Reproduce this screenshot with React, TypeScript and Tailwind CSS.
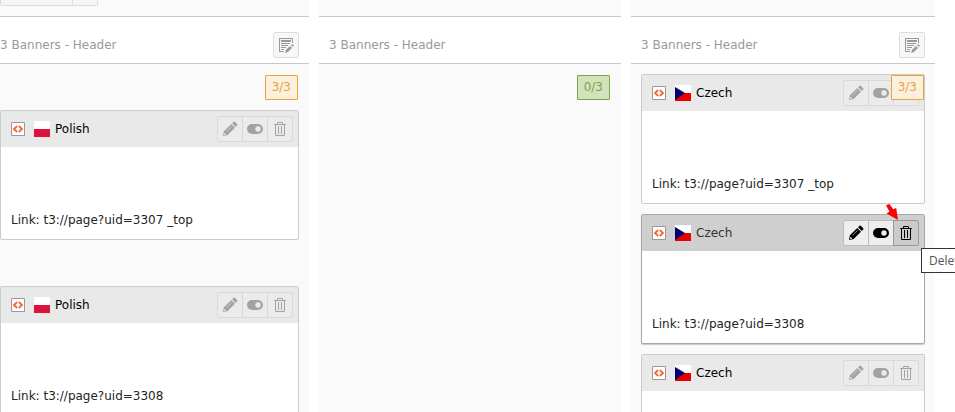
import type { ReactNode } from "react";
import clsx from "clsx";

const Icon = ({ children }: { children: ReactNode }) => (
  <svg className="block size-4 shrink-0" viewBox="0 0 16 16" fill="currentColor" aria-hidden="true">
    {children}
  </svg>
);

const PencilIcon = () => (
  <Icon>
    <path
      fillRule="evenodd"
      d="M9.2 3 1.9 10.3 1 15l4.7-.9L13 6.8zM9.4 5.2l.3.3-5.1 5.1-.3-.3zM2.8 12l1.2 1.2-.3.5-1.1.2-.5-.5.2-1.1z"
    />
    <path d="M10 2.2 11.5.8a.9.9 0 0 1 1.3 0l2.4 2.4a.9.9 0 0 1 0 1.3L13.8 6z" />
  </Icon>
);

const ToggleIcon = () => (
  <Icon>
    <path
      fillRule="evenodd"
      d="M5 3h6a5 5 0 0 1 0 10H5A5 5 0 0 1 5 3zm6 2.3a2.7 2.7 0 1 0 0 5.4 2.7 2.7 0 0 0 0-5.4z"
    />
  </Icon>
);

const TrashIcon = () => (
  <Icon>
    <path d="M6 5h1v8H6zM9 5h1v8H9z" />
    <path d="M13 3h-2v-.75C11 1.56 10.44 1 9.75 1h-3.5C5.56 1 5 1.56 5 2.25V3H3v10.75c0 .69.56 1.25 1.25 1.25h7.5c.69 0 1.25-.56 1.25-1.25V3zM6 2.25A.25.25 0 0 1 6.25 2h3.5a.25.25 0 0 1 .25.25V3H6v-.75zm6 11.5a.25.25 0 0 1-.25.25h-7.5a.25.25 0 0 1-.25-.25V4h8v9.75z" />
    <path d="M13.5 4h-11a.5.5 0 0 1 0-1h11a.5.5 0 0 1 0 1z" />
  </Icon>
);

const EditColumnIcon = () => (
  <Icon>
    <path d="M1 1h14v5h-1V2H2v12h4v1H1z" />
    <path d="M3 3h10v2H3zM3 6h9v1H3zM3 8h7v1H3zM3 10h5v1H3zM3 12h3v1H3z" />
    <path d="M12 9 7.9 13.1 7 16l2.9-.9L14 11zM12.9 8.1 14 7l2 2-1.1 1.1z" />
  </Icon>
);

const HtmlIcon = () => (
  <Icon>
    <path fill="#fff" stroke="#999" d="M1.5 1.5h13v13h-13z" />
    <path fill="none" stroke="#fa6432" strokeWidth="1.8" d="M7.2 5 4 8l3.2 3M8.8 5 12 8l-3.2 3" />
  </Icon>
);

const PolishFlag = () => (
  <Icon>
    <path fill="#fff" d="M0 0h16v8H0z" />
    <path fill="#dc143c" d="M0 8h16v8H0z" />
  </Icon>
);

const CzechFlag = () => (
  <Icon>
    <path fill="#fff" d="M0 0h16v8H0z" />
    <path fill="#e80000" d="M0 8h16v8H0z" />
    <path fill="#00006f" d="M0 2l10 6-10 7z" />
  </Icon>
);

const Tooltip = () => (
  <>
    <svg className="absolute -left-2 -top-[17px] h-[17px] w-3" viewBox="0 0 12 17" fill="#f00" aria-hidden="true">
      <path d="M0 1.2 3.5 0l3.7 5.3 3-1.3L12 16 .6 9.4l2.8-2z" />
    </svg>
    <span
      role="tooltip"
      className="absolute left-[27px] top-[27px] z-20 whitespace-nowrap border border-[#333] bg-white px-[7px] font-['Open_Sans',sans-serif] text-xs leading-[23px] text-[#555]"
    >
      Delete
    </span>
  </>
);

type CardProps = {
  lang: "Polish" | "Czech";
  link?: string;
  active?: boolean;
};

const Card = ({ lang, link, active = false }: CardProps) => {
  const button = clsx(
    "relative -ml-px flex size-[26px] items-center justify-center border first:ml-0 first:rounded-l-xs last:rounded-r-xs",
    active ? "border-[#bbb] bg-[#eee] text-black" : "border-[#d9d9d9] bg-[#ebebeb] text-[#a3a3a3]",
  );

  return (
    <article
      className={clsx(
        "h-[130px] shrink-0 rounded-xs border bg-white",
        active ? "border-[#a8a8a8] shadow-[0_1px_1px_rgba(0,0,0,0.2)]" : "border-[#cbcbcb]",
      )}
    >
      <header className={clsx("flex h-9 items-center pl-[9px] pr-[5px]", active ? "bg-[#cfcfcf]" : "bg-[#e9e9e9]")}>
        <HtmlIcon />
        <span className="ml-2">{lang === "Polish" ? <PolishFlag /> : <CzechFlag />}</span>
        <h3 className={clsx("ml-[5px]", active ? "text-[#333]" : "text-black")}>{lang}</h3>
        <div className="ml-auto flex">
          <button type="button" aria-label="Edit" className={button}>
            <PencilIcon />
          </button>
          <button type="button" aria-label="Hide" className={button}>
            <ToggleIcon />
          </button>
          <button
            type="button"
            aria-label="Delete"
            className={clsx(button, active && "border-[#999]! bg-[#cbcbcb]!")}
          >
            <TrashIcon />
            {active && <Tooltip />}
          </button>
        </div>
      </header>
      {link && <p className="px-2.5 pt-16 leading-[18px] text-[#212424]">{link}</p>}
    </article>
  );
};

const Counter = ({ value, full = false }: { value: string; full?: boolean }) => (
  <span
    className={clsx(
      "absolute right-[11px] top-[11px] z-10 rounded-[1px] border px-1.5 leading-[23px]",
      full ? "border-[#e8a33d] bg-[#fbefde] text-[#e8a33d]" : "border-[#79a548] bg-[#d1e2bd] text-[#79a548]",
    )}
  >
    {value}
  </span>
);

type ColumnProps = {
  value: string;
  full?: boolean;
  flush?: boolean;
  editable?: boolean;
  top?: ReactNode;
  children?: ReactNode;
};

const Column = ({ value, full, flush = false, editable = false, top, children }: ColumnProps) => (
  <section className="flex min-w-0 flex-col bg-[#fafafa]">
    <div className="h-4">{top}</div>
    <div
      className={clsx(
        "flex h-12 items-center justify-between border-y border-[#c8c8c8] bg-white pr-2.5",
        !flush && "pl-2.5",
      )}
    >
      <h2 className="pb-px pt-2.5 text-[#999]">3 Banners - Header</h2>
      {editable && (
        <button
          type="button"
          aria-label="Edit column"
          className="mt-2.5 flex size-[26px] items-center justify-center rounded-xs border border-[#ddd] bg-[#f7f7f7] text-[#999]"
        >
          <EditColumnIcon />
        </button>
      )}
    </div>
    <div className={clsx("relative flex grow flex-col pr-2.5", flush ? "gap-[46px] pt-[46px]" : "gap-2.5 pl-2.5 pt-2.5")}>
      <Counter value={value} full={full} />
      {children}
    </div>
  </section>
);

export default function App() {
  return (
    <main className="grid h-screen grid-cols-[309fr_302fr_304fr] gap-2.5 overflow-hidden bg-white pr-5 font-['DejaVu_Sans',Verdana,sans-serif] text-xs">
      <Column
        value="3/3"
        full
        flush
        editable
        top={
          <div className="flex h-1.5">
            <div className="w-[73px] rounded-bl-xs border-x border-b border-[#ddd] bg-[#f5f5f5]" />
            <div className="w-[25px] rounded-br-xs border-b border-r border-[#ddd] bg-[#f5f5f5]" />
          </div>
        }
      >
        <Card lang="Polish" link="Link: t3://page?uid=3307 _top" />
        <Card lang="Polish" link="Link: t3://page?uid=3308" />
      </Column>
      <Column value="0/3" />
      <Column value="3/3" full editable>
        <Card lang="Czech" link="Link: t3://page?uid=3307 _top" />
        <Card lang="Czech" link="Link: t3://page?uid=3308" active />
        <Card lang="Czech" />
      </Column>
    </main>
  );
}
